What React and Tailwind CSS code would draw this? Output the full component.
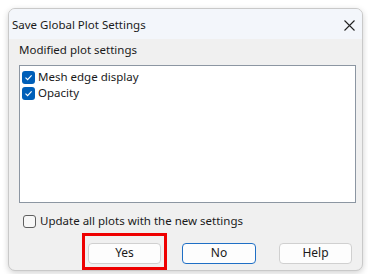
import React, { useState } from 'react';

function Check({ checked }) {
  // Windows 11 style checkbox
  return checked ? (
    <span className="flex h-[13px] w-[13px] shrink-0 items-center justify-center rounded-[3px] bg-[#005fb8]">
      <svg width="9" height="9" viewBox="0 0 9 9">
        <path d="M1.5 4.6 L3.6 6.6 L7.6 2.4" fill="none" stroke="#fff" strokeWidth="1.2" />
      </svg>
    </span>
  ) : (
    <span className="h-[13px] w-[13px] shrink-0 rounded-[3px] border border-[#5f5f5f] bg-[#f7f7f7]" />
  );
}

function Btn({ children, primary }) {
  return (
    <button
      className={
        primary
          ? 'h-[21px] w-[74px] rounded-[4px] border border-[#1f6fc5] bg-[#fdfdfd] text-[12px] text-[#1a1a1a]'
          : 'h-[21px] w-[73px] rounded-[4px] border border-[#d0d0d0] bg-[#fdfdfd] text-[12px] text-[#1a1a1a]'
      }
    >
      {children}
    </button>
  );
}

export default function App() {
  const [items] = useState(['Mesh edge display', 'Opacity']);

  return (
    <div className="h-[274px] w-[368px] bg-white pl-[8px] pt-[8px]" style={{ fontFamily: '"Noto Sans", sans-serif' }}>
      <div className="flex h-[263px] w-[355px] flex-col overflow-hidden rounded-[7px] border border-[#c9c9c9] bg-[#f0f0f0] shadow-[0_2px_6px_rgba(0,0,0,0.18)]">
        {/* title bar */}
        <div className="flex h-[30px] shrink-0 items-center justify-between bg-[#f3f6fb] pl-[3px] pr-[7px] pt-[2px]">
          <span className="text-[11.5px] text-[#1a1a1a]">Save Global Plot Settings</span>
          <svg width="11" height="11" viewBox="0 0 11 11">
            <path d="M0.5 0.5 L10.5 10.5 M10.5 0.5 L0.5 10.5" stroke="#222" strokeWidth="1.1" />
          </svg>
        </div>

        <div className="flex flex-col px-[10px]">
          <div className="mt-[3px] text-[11.5px] leading-[16px] text-[#1a1a1a]">Modified plot settings</div>
          <div className="mt-[7px] h-[138px] w-[337px] shrink-0 border border-[#8c96a2] bg-white px-[2px] pt-[3px]">
            {items.map((t) => (
              <div key={t} className="flex h-[16px] items-center gap-[3px]">
                <Check checked />
                <span className="text-[11.5px] text-[#1a1a1a]">{t}</span>
              </div>
            ))}
          </div>

          <div className="mt-[10px] flex h-[16px] items-center gap-[4px] pl-[4px]">
            <Check checked={false} />
            <span className="text-[11.5px] text-[#1a1a1a]">Update all plots with the new settings</span>
          </div>

          <div className="mt-[4px] flex items-center pl-[63px]">
            <div className="border-[3px] border-[#ee0000] p-[3px]">
              <Btn>Yes</Btn>
            </div>
            <div className="ml-[15px]">
              <Btn primary>No</Btn>
            </div>
            <div className="ml-[23px]">
              <Btn>Help</Btn>
            </div>
          </div>
        </div>
      </div>
    </div>
  );
}
